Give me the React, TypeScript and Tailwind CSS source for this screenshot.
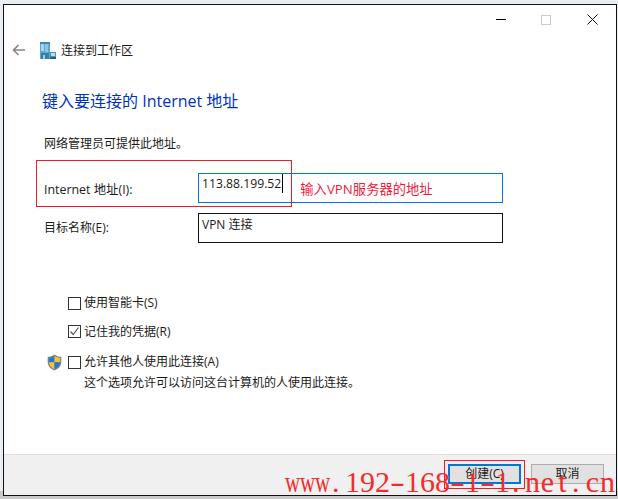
const WATERMARK = 'www.192-168-1-1.net.cn'.split('');

const WinCheck = ({ checked = false }: { checked?: boolean }) => (
  <span className="flex h-[13px] w-[13px] shrink-0 items-center justify-center border border-[#333333] bg-white">
    {checked && (
      <svg width="11" height="11" viewBox="0 0 11 11" fill="none">
        <path d="M1.5 5.5 L4.2 8.5 L9.5 1.5" stroke="#555555" strokeWidth="1.2" />
      </svg>
    )}
  </span>
);

const BuildingIcon = () => (
  <svg width="16" height="17" viewBox="0 0 16 17">
    <rect x="0" y="0" width="10" height="17" fill="#5ba6d4" />
    <rect x="0" y="0" width="10" height="2" fill="#3f86b4" />
    <rect x="1" y="2" width="3" height="7" fill="#a5d6ee" />
    <rect x="5" y="2" width="3" height="8" fill="#8cc6e6" />
    <rect x="1" y="11" width="8" height="6" fill="#3a7ea8" />
    <rect x="3" y="13" width="2" height="4" fill="#9fcfe6" />
    <rect x="10" y="10" width="6" height="7" fill="#4d8fb5" />
    <rect x="11" y="11" width="4" height="3" fill="#b8dcec" />
    <rect x="10" y="15" width="6" height="2" fill="#2f5c75" />
  </svg>
);

const ShieldIcon = () => (
  <svg width="15" height="17" viewBox="0 0 15 17">
    <path d="M7.5 0.5 C5.5 2 3 2.8 0.7 2.8 V8 C0.7 12 3.5 15 7.5 16.5 C11.5 15 14.3 12 14.3 8 V2.8 C12 2.8 9.5 2 7.5 0.5Z" fill="#7d8794" />
    <path d="M7.5 2 C6 3.1 4 3.8 2 3.9 V8.2 H7.5Z" fill="#1f78d8" />
    <path d="M7.5 2 C9 3.1 11 3.8 13 3.9 V8.2 H7.5Z" fill="#f7c325" />
    <path d="M2 8.2 H7.5 V15 C4.4 13.8 2.2 11.4 2 8.2Z" fill="#f7c325" />
    <path d="M13 8.2 H7.5 V15 C10.6 13.8 12.8 11.4 13 8.2Z" fill="#1f78d8" />
  </svg>
);

const App = () => {
  return (
    <div
      className="relative h-[499px] w-[618px] overflow-hidden bg-[#e9eef3] pl-[3px] pt-1 text-[12px] leading-[20px] text-[#1a1a1a]"
      style={{ fontFamily: '"Open Sans", "Noto Sans CJK SC", sans-serif' }}
    >
      <div className="absolute bottom-0 left-0 h-[8px] w-full bg-[#c9c9c9]" />
      <div className="relative flex h-[492px] w-[614px] flex-col border border-[#111111] bg-white">
        {/* Title bar */}
        <div className="flex h-[29px] shrink-0 items-center justify-end">
          <span className="mr-[35px] h-px w-[10px] bg-black" />
          <span className="mr-[36px] h-[10px] w-[10px] border border-[#cccccc]" />
          <svg className="mr-[18px]" width="11" height="11" viewBox="0 0 11 11" stroke="#111111" fill="none">
            <path d="M0.5 0.5 L10.5 10.5 M10.5 0.5 L0.5 10.5" />
          </svg>
        </div>

        {/* Back + title */}
        <div className="flex h-[32px] shrink-0 items-center pl-2">
          <svg width="13" height="12" viewBox="0 0 13 12" fill="none" stroke="#858585" strokeWidth="1.6">
            <path d="M13 6 H1.5 M6.5 1 L1.5 6 L6.5 11" />
          </svg>
          <span className="ml-[15px]"><BuildingIcon /></span>
          <span className="ml-[5px] mt-[2px]">连接到工作区</span>
        </div>

        <div className="mt-5 flex h-[30px] shrink-0 items-center pl-[38px] text-[16px] text-[#0033bc]">
          键入要连接的 Internet 地址
        </div>

        <div className="mt-[18px] h-5 shrink-0 pl-10">网络管理员可提供此地址。</div>

        {/* Form */}
        <div className="mt-[19px] flex h-[30px] shrink-0 pl-10">
          <span className="mt-[7px] w-[154px] text-[12.4px]">Internet 地址(I):</span>
          <div className="flex h-[30px] w-[305px] items-start border border-[#0078d7] pl-[3px]">
            <span className="border-r border-black pr-px text-[12.2px] leading-[19px]">113.88.199.52</span>
            <span className="ml-[17px] mt-[5px] text-[13.3px] text-[#ee1c3a]">输入VPN服务器的地址</span>
          </div>
        </div>
        <div className="mt-[10px] flex h-[30px] shrink-0 pl-10">
          <span className="mt-[5px] w-[154px]">目标名称(E):</span>
          <div className="h-[30px] w-[305px] border border-[#111111] pl-[3px] leading-[21px]">VPN 连接</div>
        </div>

        {/* Options */}
        <div className="mt-[50px] flex h-5 shrink-0 items-center gap-[3px] pl-16">
          <WinCheck />
          <span>使用智能卡(S)</span>
        </div>
        <div className="mt-2 flex h-5 shrink-0 items-center gap-[3px] pl-16">
          <WinCheck checked />
          <span className="mt-px">记住我的凭据(R)</span>
        </div>
        <div className="mt-[11px] flex h-5 shrink-0 items-center pl-[43px]">
          <ShieldIcon />
          <span className="ml-[6px]"><WinCheck /></span>
          <span className="ml-[3px]">允许其他人使用此连接(A)</span>
        </div>
        <div className="h-5 shrink-0 pl-[80px] pt-px">这个选项允许可以访问这台计算机的人使用此连接。</div>

        <div className="flex-1" />

        {/* Footer */}
        <div className="flex h-[41px] shrink-0 justify-end gap-[10px] border-t border-[#dfdfdf] bg-[#f0f0f0] pr-[12px] pt-[9px]">
          <button className="flex h-5 w-[73px] items-center justify-center border-2 border-[#0078d7] bg-[#e1e1e1]">创建(C)</button>
          <button className="flex h-5 w-[73px] items-center justify-center border border-[#adadad] bg-[#e1e1e1]">取消</button>
        </div>
      </div>

      {/* Red annotations */}
      <div className="absolute left-[36px] top-[160px] h-[47px] w-[256px] border border-[#ee1c25]" />
      <div className="absolute left-[444px] top-[460px] h-[29px] w-[81px] border border-[#ee1c25]" />

      {/* Watermark */}
      <div
        className="absolute left-[285px] top-[465px] flex text-[30px] leading-[33px] text-[#f22c2c]"
        style={{ fontFamily: '"Liberation Serif", serif' }}
      >
        {WATERMARK.map((ch, i) => (
          <span
            key={i}
            className={
              ch === 'w'
                ? 'flex w-[15px] scale-x-[0.7] justify-center'
                : ch === '-'
                  ? 'flex w-[15px] scale-x-150 justify-center'
                  : ch === '.'
                    ? 'w-[15px] pl-[2px] text-left'
                    : 'w-[15px] text-center'
            }
          >
            {ch}
          </span>
        ))}
      </div>
    </div>
  );
};

export default App;
